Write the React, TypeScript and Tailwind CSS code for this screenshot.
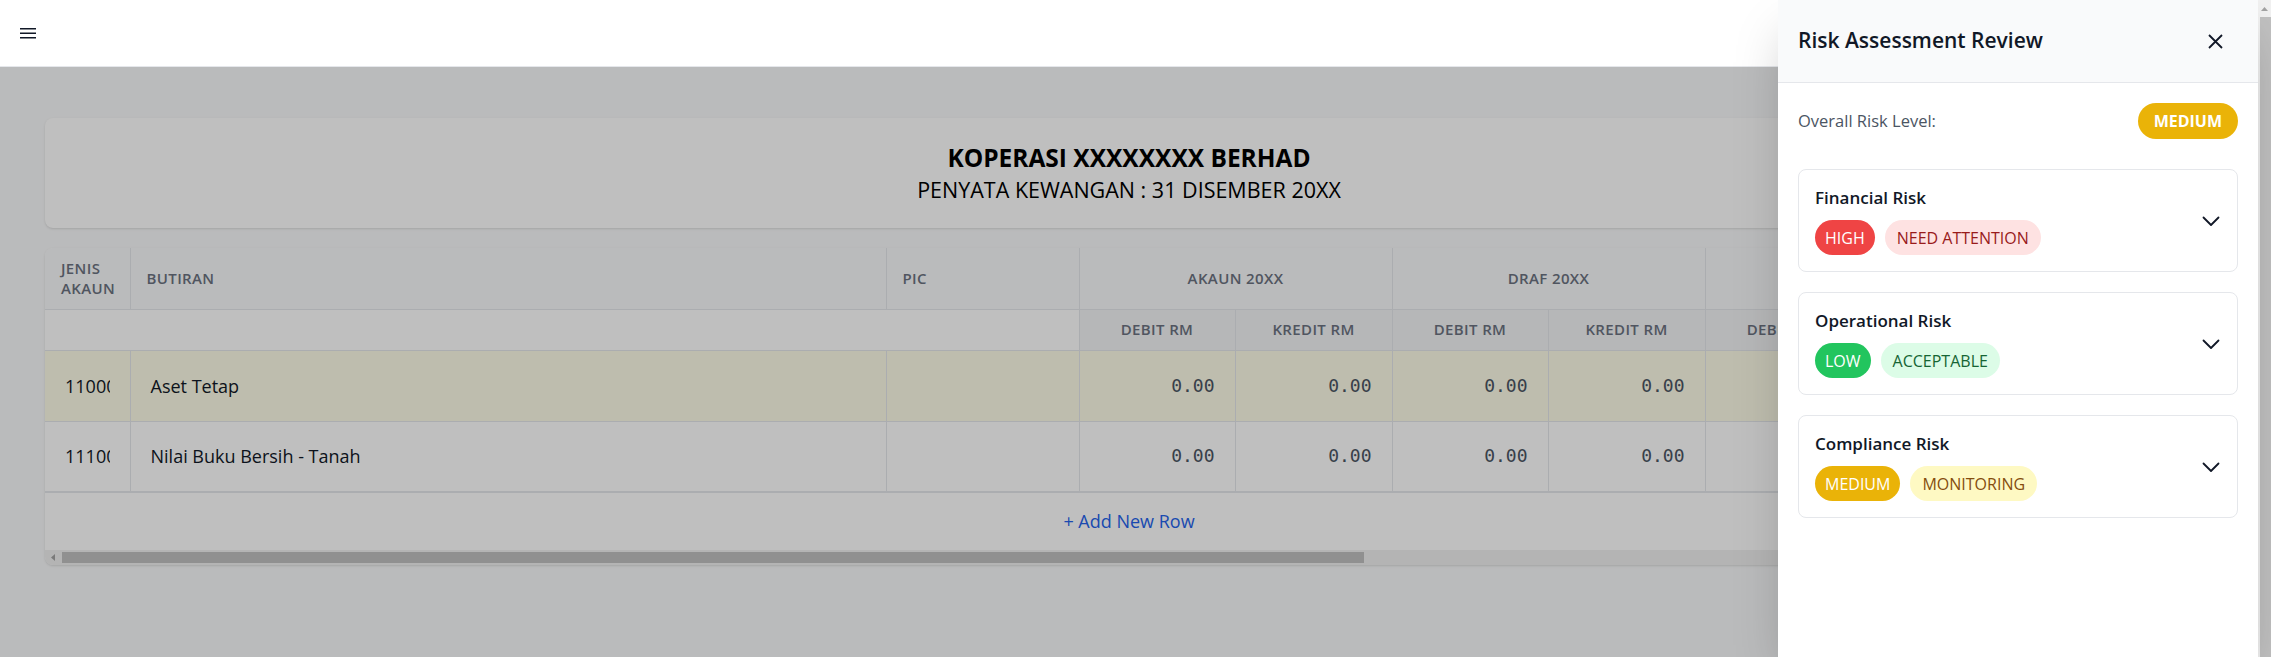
type Level = 'HIGH' | 'MEDIUM' | 'LOW';

const groups = [
  'AKAUN 20XX',
  'DRAF 20XX',
  'PELARASAN',
  'AKAUN AKHIR 20XX',
  'BAJET 20XX',
  'VARIANS',
  'AKAUN 20XX-1',
  'CATATAN AUDIT',
];

const rows = [
  { code: '11000', name: 'Aset Tetap', highlight: true },
  { code: '11100', name: 'Nilai Buku Bersih - Tanah', highlight: false },
];

const risks: { title: string; level: Level; status: string }[] = [
  { title: 'Financial Risk', level: 'HIGH', status: 'NEED ATTENTION' },
  { title: 'Operational Risk', level: 'LOW', status: 'ACCEPTABLE' },
  { title: 'Compliance Risk', level: 'MEDIUM', status: 'MONITORING' },
];

// tailwind v3 palette values, the v4 oklch ones come out too saturated
const levelStyle: Record<Level, string> = {
  HIGH: 'bg-[#ef4444] text-white',
  MEDIUM: 'bg-[#eab308] text-white',
  LOW: 'bg-[#22c55e] text-white',
};

const statusStyle: Record<Level, string> = {
  HIGH: 'bg-[#fee2e2] text-[#991b1b]',
  MEDIUM: 'bg-[#fef9c3] text-[#854d0e]',
  LOW: 'bg-[#dcfce7] text-[#166534]',
};

function FinanceTable() {
  return (
    <div className="bg-white rounded-lg shadow-sm overflow-hidden">
      <div className="overflow-hidden">
        <table className="table-fixed border-collapse w-[3538px]">
          <colgroup>
            <col className="w-[85px]" />
            <col className="w-[756px]" />
            <col className="w-[193px]" />
            {groups.map((g) => [<col key={g + 'd'} className="w-[156px]" />, <col key={g + 'k'} className="w-[157px]" />])}
          </colgroup>
          <thead>
            <tr className="bg-[#f9fafb] border-b border-[#e5e7eb] text-[15px] tracking-wide text-[#6b7280] uppercase">
              <th className="h-[61px] px-4 text-left font-semibold leading-5 border-r border-[#e5e7eb]">Jenis Akaun</th>
              <th className="px-4 text-left font-semibold border-r border-[#e5e7eb]">Butiran</th>
              <th className="px-4 text-left font-semibold border-r border-[#e5e7eb]">PIC</th>
              {groups.map((g) => (
                <th key={g} colSpan={2} className="px-4 text-center font-semibold border-r border-[#e5e7eb]">
                  {g}
                </th>
              ))}
            </tr>
            <tr className="border-b border-[#e5e7eb] text-[15px] tracking-wide text-[#6b7280] uppercase">
              <th colSpan={3} className="h-[41px] bg-white border-r border-[#e5e7eb]" />
              {groups.map((g) => [
                <th key={g + 'd'} className="bg-[#f3f4f6] text-center font-semibold border-r border-[#e5e7eb]">
                  Debit RM
                </th>,
                <th key={g + 'k'} className="bg-[#f3f4f6] text-center font-semibold border-r border-[#e5e7eb]">
                  Kredit RM
                </th>,
              ])}
            </tr>
          </thead>
          <tbody className="text-lg text-[#111827]">
            {rows.map((r, i) => (
              <tr
                key={r.code}
                className={`${r.highlight ? 'bg-[#fefce8]' : 'bg-white'} ${
                  i === rows.length - 1 ? 'border-b-2' : 'border-b'
                } border-[#e5e7eb]`}
              >
                <td className="h-[71px] px-3 border-r border-[#e5e7eb]">
                  <div className="px-2">
                    <div className="w-[45px] overflow-hidden whitespace-nowrap">{r.code}</div>
                  </div>
                </td>
                <td className="px-3 border-r border-[#e5e7eb]">
                  <div className="px-2">{r.name}</div>
                </td>
                <td className="px-3 border-r border-[#e5e7eb]" />
                {groups.map((g) => [
                  <td key={g + 'd'} className="px-3 border-r border-[#e5e7eb]">
                    <div className="px-2 text-right font-['DejaVu_Sans_Mono',monospace] text-[#4b5563]">0.00</div>
                  </td>,
                  <td key={g + 'k'} className="px-3 border-r border-[#e5e7eb]">
                    <div className="px-2 text-right font-['DejaVu_Sans_Mono',monospace] text-[#4b5563]">0.00</div>
                  </td>,
                ])}
              </tr>
            ))}
          </tbody>
        </table>
      </div>
      <div className="py-4 text-center">
        <button className="text-lg leading-6 text-[#2563eb]">+ Add New Row</button>
      </div>
      {/* horizontal scrollbar of the table */}
      <div className="flex h-[15px] bg-[#f1f1f1]">
        <div className="w-[15px] flex items-center justify-center">
          <svg width="4" height="7" viewBox="0 0 4 7">
            <polygon points="4,0 0,3.5 4,7" fill="#a3a3a3" />
          </svg>
        </div>
        <div className="w-[1302px] ml-[2px] my-[2px] bg-[#c1c1c1]" />
      </div>
    </div>
  );
}

function RiskPanel() {
  return (
    <aside className="absolute top-0 right-0 h-full w-[480px] bg-white shadow-2xl flex flex-col">
      <div className="h-[83px] shrink-0 bg-[#f9fafb] border-b border-[#e5e7eb] flex items-center justify-between pl-5 pr-[35px]">
        <h2 className="text-[21px] font-semibold text-[#111827]">Risk Assessment Review</h2>
        <button className="text-[#111827]" title="Close">
          <svg width="15" height="15" viewBox="0 0 15 15" fill="none" stroke="currentColor" strokeWidth="1.8">
            <path d="M1 1l13 13M14 1L1 14" />
          </svg>
        </button>
      </div>
      <div className="p-5">
        <div className="h-[36px] mb-[30px] flex items-center justify-between">
          <span className="text-[16.5px] text-[#4b5563]">Overall Risk Level:</span>
          <span className="h-[36px] px-4 rounded-full bg-[#eab308] text-white text-base font-bold flex items-center">
            MEDIUM
          </span>
        </div>
        <div className="space-y-5">
          {risks.map((r) => (
            <div key={r.title} className="border border-[#e5e7eb] rounded-lg p-4 flex items-center justify-between">
              <div>
                <p className="text-[17px] font-semibold leading-6 text-[#111827]">{r.title}</p>
                <div className="mt-[10px] flex items-center gap-2.5">
                  <span className={`h-[35px] px-2.5 rounded-full flex items-center text-base ${levelStyle[r.level]}`}>
                    {r.level}
                  </span>
                  <span className={`h-[35px] px-3 rounded-full flex items-center text-base ${statusStyle[r.level]}`}>
                    {r.status}
                  </span>
                </div>
              </div>
              <svg width="20" height="20" viewBox="0 0 20 20" fill="none" stroke="#111827" strokeWidth="1.8" strokeLinecap="round" strokeLinejoin="round">
                <polyline points="2.5,6.5 10,14 17.5,6.5" />
              </svg>
            </div>
          ))}
        </div>
      </div>
    </aside>
  );
}

export default function App() {
  return (
    <div className="h-screen w-full overflow-hidden flex bg-[#f9fafb] font-['Open_Sans',sans-serif]">
      <div className="relative flex-1 min-w-0 flex flex-col">
        <header className="h-[67px] shrink-0 bg-white border-b border-[#e5e7eb] flex items-center pl-5">
          <svg width="16" height="11" viewBox="0 0 16 11" className="text-[#111827]">
            <rect x="0" y="0" width="16" height="1.5" fill="currentColor" />
            <rect x="0" y="4.5" width="16" height="1.5" fill="currentColor" />
            <rect x="0" y="9" width="16" height="1.5" fill="currentColor" />
          </svg>
        </header>
        <main className="relative flex-1 px-[45px] pt-[51px]">
          <div className="bg-white rounded-lg shadow-sm py-6 mb-5 text-center text-black">
            <h1 className="text-[24.5px] font-bold leading-8">KOPERASI XXXXXXXX BERHAD</h1>
            <p className="text-[21.5px] leading-7 mt-0.5">PENYATA KEWANGAN : 31 DISEMBER 20XX</p>
          </div>
          <FinanceTable />
          <div className="absolute inset-0 bg-black/25" />
        </main>
        <RiskPanel />
      </div>
      {/* page scrollbar */}
      <div className="w-[13px] shrink-0 flex flex-col bg-[#f1f1f1]">
        <div className="h-[17px] flex items-center justify-center">
          <svg width="7" height="4" viewBox="0 0 7 4">
            <polygon points="0,4 3.5,0 7,4" fill="#a3a3a3" />
          </svg>
        </div>
        <div className="flex-1 ml-[2px] bg-[#c1c1c1]" />
      </div>
    </div>
  );
}
